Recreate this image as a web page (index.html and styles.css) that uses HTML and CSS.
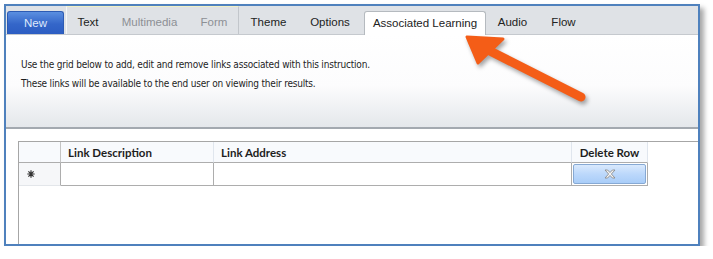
FILE: index.html
```html
<!DOCTYPE html>
<html lang="en">
<head>
  <meta charset="UTF-8" />
  <meta name="viewport" content="width=device-width, initial-scale=1.0"/>
  <title>Associated Learning</title>
  <link rel="stylesheet" href="styles.css">
</head>
<body>
  <div class="frame">
    <div class="tabbar">
      <div class="tab tab-new">New</div>
      <div class="tab-group">
        <div class="tab w-text">Text</div>
        <div class="tab tab-off w-multi">Multimedia</div>
        <div class="tab tab-off w-form">Form</div>
      </div>
      <div class="tab w-theme">Theme</div>
      <div class="tab w-options">Options</div>
      <div class="tab tab-active">Associated Learning</div>
      <div class="tab w-audio">Audio</div>
      <div class="tab w-flow">Flow</div>
    </div>

    <div class="panel">
      <p>Use the grid below to add, edit and remove links associated with this instruction.</p>
      <p>These links will be available to the end user on viewing their results.</p>
    </div>

    <div class="grid">
      <div class="grid-row grid-head">
        <div class="cell cell-rowhead"></div>
        <div class="cell">Link Description</div>
        <div class="cell">Link Address</div>
        <div class="cell cell-center">Delete Row</div>
      </div>
      <div class="grid-row grid-new">
        <div class="cell cell-rowhead">
          <svg class="star" width="8" height="8" viewBox="0 0 8 8">
            <path d="M4 0.3V7.7M0.3 4H7.7M1.4 1.4L6.6 6.6M6.6 1.4L1.4 6.6" stroke="#333" stroke-width="1.2"/>
          </svg>
        </div>
        <div class="cell"></div>
        <div class="cell"></div>
        <div class="cell cell-btn">
          <button class="del-btn" type="button">
            <svg width="12" height="10" viewBox="0 0 12 10">
              <path d="M1 1H3.6L6 3.5L8.4 1H11L7.4 5L11 9H8.4L6 6.5L3.6 9H1L4.6 5Z" fill="#f4f4f4" stroke="#8c8c8c" stroke-width="0.9" stroke-linejoin="round"/>
            </svg>
          </button>
        </div>
      </div>
    </div>
  </div>

  <!-- callout arrow pointing at the tab -->
  <svg class="arrow" width="713" height="259" viewBox="0 0 713 259">
    <line x1="490" y1="51" x2="581" y2="97" stroke="#f45d17" stroke-width="9" stroke-linecap="round"/>
    <polygon points="467,37 503,39 478,63" fill="#f45d17" stroke="#f45d17" stroke-width="3" stroke-linejoin="round"/>
  </svg>
</body>
</html>
```

FILE: styles.css
```css
body {
  margin: 0;
  padding: 4px 0 0 4px;
  background: #ffffff;
  font-family: 'Liberation Sans', Arial, sans-serif;
}

.frame {
  box-sizing: border-box;
  width: 696px;
  height: 242px;
  border: 2px solid #4f81bd;
  background: #ffffff;
  display: flex;
  flex-direction: column;
  box-shadow: 4px 4px 5px rgba(0, 0, 0, 0.35);
}

/* tab strip */
.tabbar {
  height: 28px;
  display: flex;
  align-items: flex-start;
  padding-left: 1px;
  background: #dfe2e6;
  border-bottom: 1px solid #c5c9ce;
}

.tab {
  box-sizing: border-box;
  height: 23px;
  margin-top: 5px;
  line-height: 23px;
  font-size: 11.5px;
  color: #222;
  text-align: center;
  white-space: nowrap;
}

.tab-off {
  color: #8d9095;
}

.tab-new {
  width: 57px;
  margin-right: 2px;
  color: #dfe9fc;
  background: linear-gradient(#5b8fe0, #3466c9 55%, #2c5dc2);
  border: 1px solid #2d5bb3;
  border-bottom: none;
  border-radius: 3px 3px 0 0;
  line-height: 22px;
}

.tab-group {
  display: flex;
  height: 28px;
  box-sizing: border-box;
  border-top: 1px solid #f1f0c4;
  border-left: 1px solid #f5f6f8;
  border-right: 1px solid #c2c6cb;
}

.tab-group .tab {
  margin-top: 4px;
}

.w-text { width: 42px; }
.w-multi { width: 81px; }
.w-form { width: 48px; }
.w-theme { width: 59px; }
.w-options { width: 64px; margin-right: 2px; }
.w-audio { width: 53px; }
.w-flow { width: 49px; }

.tab-active {
  width: 122px;
  height: 24px;
  margin-bottom: -1px;
  background: #ffffff;
  border: 1px solid #b5babf;
  border-bottom: none;
  border-radius: 3px 3px 0 0;
  line-height: 22px;
}

/* instructions */
.panel {
  height: 94px;
  padding: 20px 0 0 15px;
  box-sizing: border-box;
  background: linear-gradient(#ffffff, #fcfcfd 55%, #e4e7eb);
  border-bottom: 2px solid #a3a9b0;
}

.panel p {
  margin: 0;
  font-family: 'DejaVu Sans Condensed', 'DejaVu Sans', sans-serif;
  font-stretch: condensed;
  font-size: 10px;
  letter-spacing: -0.2px;
  line-height: 19px;
  color: #1e1e1e;
}

/* links grid */
.grid {
  flex: 1;
  margin: 12px 0 0 12px;
  border-top: 1px solid #a6a6a6;
  border-left: 1px solid #a6a6a6;
}

.grid-row {
  display: grid;
  grid-template-columns: 42px 153px 358px 76px;
}

.cell {
  box-sizing: border-box;
  border-right: 1px solid #adadad;
  border-bottom: 1px solid #adadad;
}

.grid-head .cell {
  height: 21px;
  padding: 4px 0 0 7px;
  background: #f8fafd;
  border-right-color: #e0e6ee;
  font-family: Lato, sans-serif;
  font-weight: 700;
  font-size: 11.5px;
  color: #1e1e1e;
}

.grid-head .cell-rowhead {
  border-right-color: #c4c4c4;
}

.grid-head .cell-center {
  padding-left: 0;
  text-align: center;
}

.grid-new .cell {
  height: 23px;
}

.grid-new .cell-rowhead {
  background: #f6f7f9;
  border-bottom-color: #e3e6ea;
  display: flex;
  align-items: center;
  padding-left: 8px;
}

.cell-btn {
  padding: 1px;
}

.del-btn {
  width: 100%;
  height: 100%;
  padding: 0;
  display: flex;
  align-items: center;
  justify-content: center;
  background: linear-gradient(#d9e9fd, #bcd8fb 50%, #a9cdf8);
  border: 1px solid #86a9d4;
  border-radius: 2px;
}

.arrow {
  position: absolute;
  left: 0;
  top: 0;
  pointer-events: none;
  filter: drop-shadow(2px 3px 2px rgba(0, 0, 0, 0.35));
}
```
